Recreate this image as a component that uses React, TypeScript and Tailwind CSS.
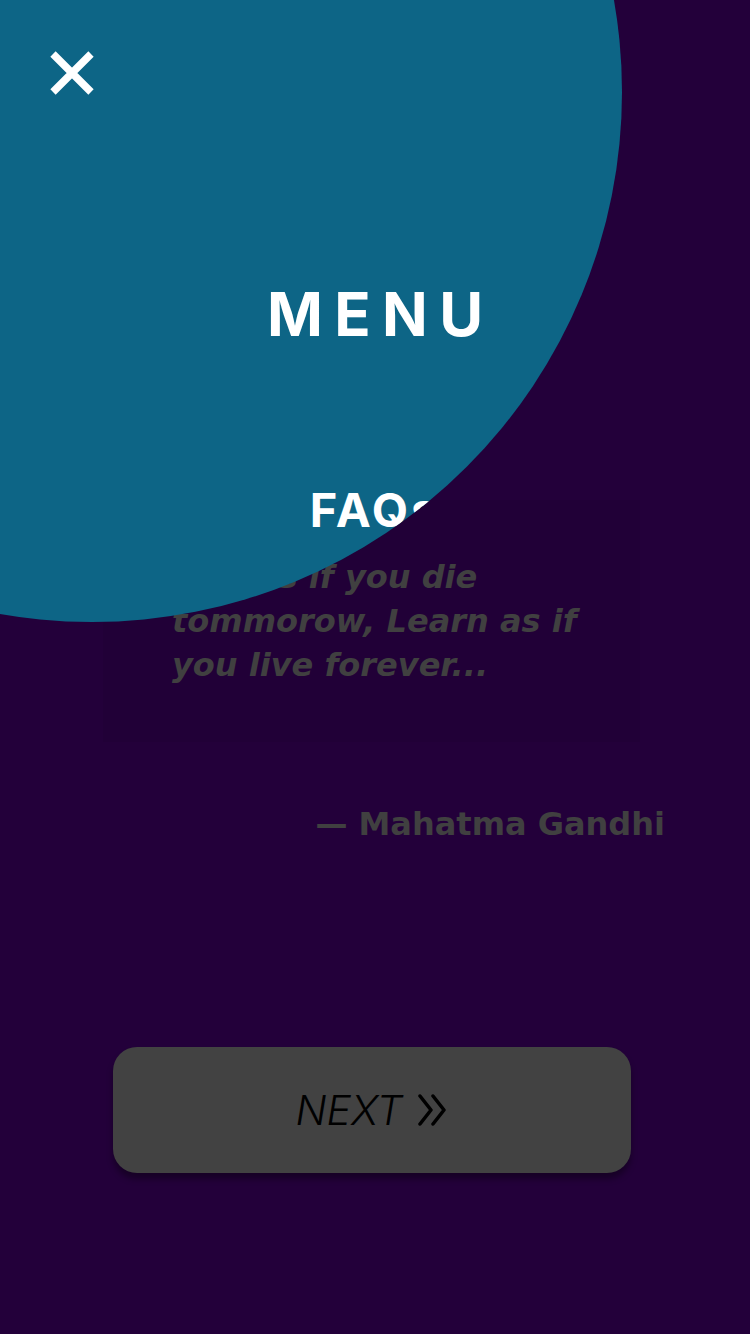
import React from "react";

const font = { fontFamily: "Inter, 'Noto Sans', sans-serif" };
const wide = { fontFamily: "'DejaVu Sans', 'Noto Sans', sans-serif" };

function CloseIcon() {
  return (
    <svg width="46" height="46" viewBox="0 0 46 46" className="block">
      <path d="M4 4 L42 42 M42 4 L4 42" stroke="#ffffff" strokeWidth="7.5" strokeLinecap="butt" fill="none" />
    </svg>
  );
}

function Chevrons() {
  return (
    <svg width="32" height="32" viewBox="0 0 32 32" className="block">
      <path d="M3 2 L14 16 L3 30 M16 2 L27 16 L16 30" stroke="#000000" strokeWidth="3.5" strokeLinecap="round" strokeLinejoin="round" fill="none" />
    </svg>
  );
}

function MenuOverlay() {
  return (
    <div className="absolute left-[-438px] top-[-438px] w-[1060px] h-[1060px] rounded-full overflow-hidden bg-[#0d6586]">
      <div className="absolute left-[438px] top-[438px] w-[750px] h-[1334px] flex flex-col" style={font}>
        <div className="ml-[49px] mt-[50px]">
          <CloseIcon />
        </div>
        <div className="mt-[188px] text-center text-white font-bold text-[60px] leading-none tracking-[0.19em] pl-[0.19em]">
          MENU
        </div>
        <div className="mt-[142px] text-center text-white font-bold text-[47px] leading-none tracking-[0.06em]">
          FAQs
        </div>
      </div>
    </div>
  );
}

export default function App() {
  return (
    <div className="relative w-[750px] h-[1334px] overflow-hidden bg-[#23003a]" style={font}>
      <div className="flex flex-col pt-[500px]">
        <div className="mx-[103px] w-[537px] h-[242px] bg-[#210037] pl-[69px] pr-[40px] pt-[55px]" style={wide}>
          <p className="italic font-semibold text-[32px] leading-[44px] text-[#404040]">
            Live as if you die tommorow, Learn as if you live forever...
          </p>
        </div>
        <div className="mt-[60px] pr-[85px] text-right font-bold text-[32px] leading-[44px] text-[#404040]" style={wide}>
          — Mahatma Gandhi
        </div>
        <div className="mt-[201px] ml-[113px] w-[518px] h-[126px] rounded-[24px] bg-[#424242] shadow-[0_6px_6px_rgba(0,0,0,0.35)] flex items-center justify-center gap-[14px]">
          <span className="italic font-light text-[41px] leading-none text-black">NEXT</span>
          <Chevrons />
        </div>
      </div>
      <MenuOverlay />
    </div>
  );
}
